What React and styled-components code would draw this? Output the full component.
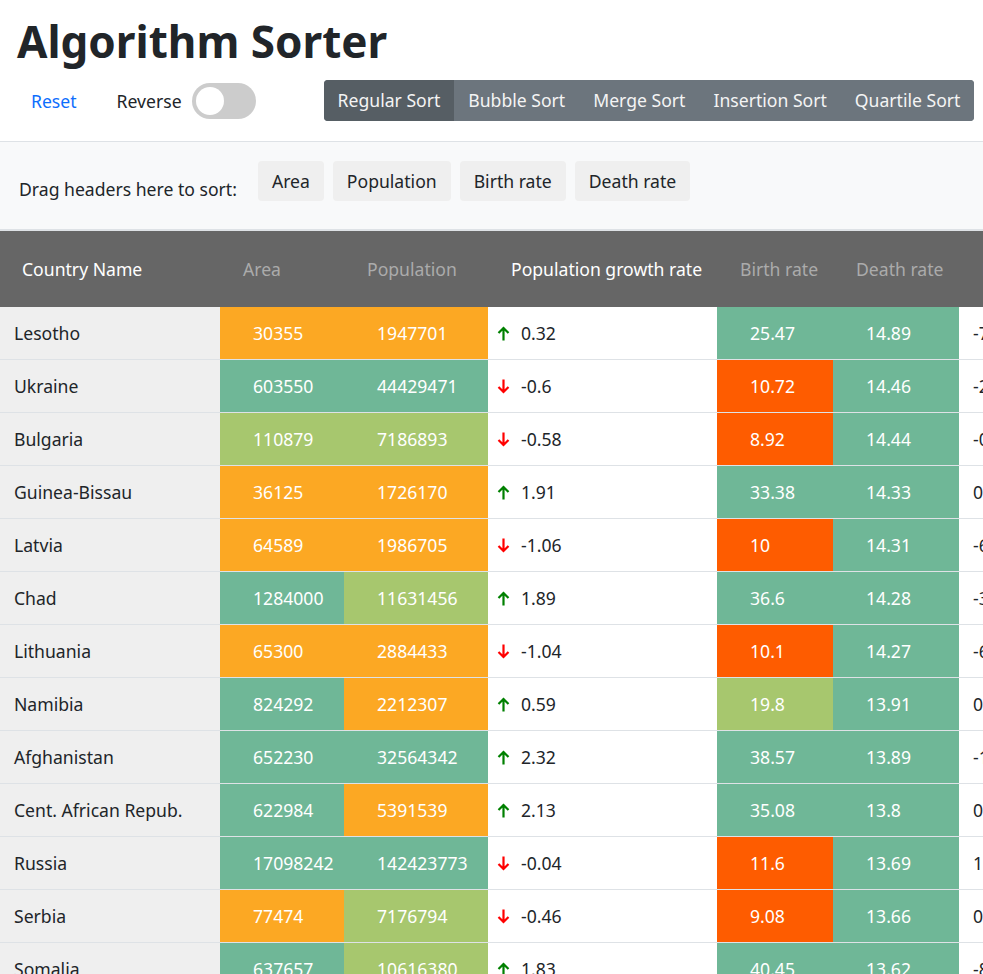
import React from "react";
import styled, { createGlobalStyle } from "styled-components";

const Global = createGlobalStyle`
  html, body { margin: 0; padding: 0; background: #fff; }
  body { font-family: "Noto Sans", "Open Sans", sans-serif; color: #212529; overflow-x: hidden; }
  ::-webkit-scrollbar { display: none; }
  * { box-sizing: border-box; }
`;

const COLORS = {
  o: "#fca823",
  g: "#6fb797",
  l: "#a7c76e",
  r: "#fe5c00",
};

const FS = "17.6px";

const Page = styled.div`
  width: 100%;
  overflow: hidden;
`;

const Top = styled.header`
  padding: 14px 17px 20px;
`;

const Title = styled.h1`
  margin: 0 0 11px;
  font-size: 44px;
  line-height: 55px;
  font-weight: 700;
  color: #212529;
`;

const Controls = styled.div`
  display: flex;
  align-items: center;
  height: 41px;
`;

const LinkButton = styled.button`
  background: none;
  border: 0;
  padding: 0 14px;
  font: inherit;
  font-size: ${FS};
  color: #0d6efd;
  cursor: pointer;
`;

const SwitchLabel = styled.label`
  display: flex;
  align-items: center;
  gap: 10px;
  margin-left: 26px;
  font-size: ${FS};
`;

const Track = styled.span`
  position: relative;
  display: inline-block;
  width: 64px;
  height: 36px;
  border-radius: 18px;
  background: #cccccc;
`;

const Knob = styled.span`
  position: absolute;
  left: 4px;
  top: 4px;
  width: 28px;
  height: 28px;
  border-radius: 50%;
  background: #fff;
`;

const Group = styled.div`
  display: flex;
  flex-shrink: 0;
  margin-left: 68px;
  border-radius: 4px;
  overflow: hidden;
  background: #6c757d;
`;

const GroupButton = styled.button`
  border: 0;
  font: inherit;
  font-size: ${FS};
  line-height: 27px;
  padding: 7px 14px;
  white-space: nowrap;
  flex-shrink: 0;
  color: #f4f4f4;
  background: ${(p) => (p.$active ? "#565e64" : "#6c757d")};
  cursor: pointer;
`;

const DropZone = styled.div`
  display: flex;
  align-items: flex-start;
  gap: 9px;
  padding: 19px 19px 26px;
  background: #f8f9fa;
  border-top: 1px solid #dee2e6;
  border-bottom: 2px solid #dee2e6;
`;

const DropLabel = styled.span`
  font-size: ${FS};
  line-height: 27px;
  padding-top: 15px;
  margin-right: 12px;
`;

const Chip = styled.span`
  font-size: ${FS};
  line-height: 27px;
  padding: 6.5px 14px;
  background: #efefef;
  border-radius: 4px;
`;

const COLS = "220px 124px 144px 229px 116px 126px 220px";

const Table = styled.div`
  width: 1179px;
`;

const HeadRow = styled.div`
  display: grid;
  grid-template-columns: ${COLS};
  height: 76px;
  background: #666666;
`;

const HeadCell = styled.div`
  display: flex;
  align-items: center;
  padding-left: ${(p) => (p.$first ? "22px" : "23px")};
  font-size: ${FS};
  color: ${(p) => (p.$dim ? "#ababab" : "#ffffff")};
  white-space: nowrap;
`;

const Row = styled.div`
  display: grid;
  grid-template-columns: ${COLS};
  height: 53px;
  border-bottom: 1px solid #dee2e6;
`;

const NameCell = styled.div`
  display: flex;
  align-items: center;
  padding-left: 14px;
  background: #efefef;
  font-size: ${FS};
  white-space: nowrap;
`;

const ColorCell = styled.div`
  display: flex;
  align-items: center;
  padding-left: 33px;
  background: ${(p) => COLORS[p.$c]};
  color: #fff;
  font-size: ${FS};
`;

const GrowthCell = styled.div`
  display: flex;
  align-items: center;
  gap: 11px;
  padding-left: 9px;
  font-size: ${FS};
  background: #fff;
`;

const PlainCell = styled.div`
  display: flex;
  align-items: center;
  padding-left: 14px;
  font-size: ${FS};
  background: #fff;
`;

const Arrow = ({ up }) => (
  <svg width="13" height="15" viewBox="0 0 13 15" aria-hidden="true">
    {up ? (
      <path d="M6.5 14.5V2M1.5 7L6.5 2l5 5" stroke="#008000" strokeWidth="2.2" fill="none" />
    ) : (
      <path d="M6.5 0.5V13M1.5 8l5 5 5-5" stroke="#ff0000" strokeWidth="2.2" fill="none" />
    )}
  </svg>
);

const rows = [
  ["Lesotho", "30355", "o", "1947701", "o", "0.32", "25.47", "g", "14.89", "g", "-7.0"],
  ["Ukraine", "603550", "g", "44429471", "g", "-0.6", "10.72", "r", "14.46", "g", "-2.2"],
  ["Bulgaria", "110879", "l", "7186893", "l", "-0.58", "8.92", "r", "14.44", "g", "-0.3"],
  ["Guinea-Bissau", "36125", "o", "1726170", "o", "1.91", "33.38", "g", "14.33", "g", "0"],
  ["Latvia", "64589", "o", "1986705", "o", "-1.06", "10", "r", "14.31", "g", "-6.3"],
  ["Chad", "1284000", "g", "11631456", "l", "1.89", "36.6", "g", "14.28", "g", "-3.1"],
  ["Lithuania", "65300", "o", "2884433", "o", "-1.04", "10.1", "r", "14.27", "g", "-6.2"],
  ["Namibia", "824292", "g", "2212307", "o", "0.59", "19.8", "l", "13.91", "g", "0"],
  ["Afghanistan", "652230", "g", "32564342", "g", "2.32", "38.57", "g", "13.89", "g", "-1.4"],
  ["Cent. African Repub.", "622984", "g", "5391539", "o", "2.13", "35.08", "g", "13.8", "g", "0"],
  ["Russia", "17098242", "g", "142423773", "g", "-0.04", "11.6", "r", "13.69", "g", "1.7"],
  ["Serbia", "77474", "o", "7176794", "l", "-0.46", "9.08", "r", "13.66", "g", "0"],
  ["Somalia", "637657", "g", "10616380", "l", "1.83", "40.45", "g", "13.62", "g", "-8.5"],
];

const sorts = ["Regular Sort", "Bubble Sort", "Merge Sort", "Insertion Sort", "Quartile Sort"];

export default function App() {
  return (
    <Page>
      <Global />
      <Top>
        <Title>Algorithm Sorter</Title>
        <Controls>
          <LinkButton>Reset</LinkButton>
          <SwitchLabel>
            Reverse
            <Track>
              <Knob />
            </Track>
          </SwitchLabel>
          <Group>
            {sorts.map((s, i) => (
              <GroupButton key={s} $active={i === 0}>
                {s}
              </GroupButton>
            ))}
          </Group>
        </Controls>
      </Top>
      <DropZone>
        <DropLabel>Drag headers here to sort:</DropLabel>
        <Chip>Area</Chip>
        <Chip>Population</Chip>
        <Chip>Birth rate</Chip>
        <Chip>Death rate</Chip>
      </DropZone>
      <Table>
        <HeadRow>
          <HeadCell $first>Country Name</HeadCell>
          <HeadCell $dim>Area</HeadCell>
          <HeadCell $dim>Population</HeadCell>
          <HeadCell>Population growth rate</HeadCell>
          <HeadCell $dim>Birth rate</HeadCell>
          <HeadCell $dim>Death rate</HeadCell>
          <HeadCell>Net migration rate</HeadCell>
        </HeadRow>
        {rows.map((r) => (
          <Row key={r[0]}>
            <NameCell>{r[0]}</NameCell>
            <ColorCell $c={r[2]}>{r[1]}</ColorCell>
            <ColorCell $c={r[4]}>{r[3]}</ColorCell>
            <GrowthCell>
              <Arrow up={!r[5].startsWith("-")} />
              {r[5]}
            </GrowthCell>
            <ColorCell $c={r[7]}>{r[6]}</ColorCell>
            <ColorCell $c={r[9]}>{r[8]}</ColorCell>
            <PlainCell>{r[10]}</PlainCell>
          </Row>
        ))}
      </Table>
    </Page>
  );
}
